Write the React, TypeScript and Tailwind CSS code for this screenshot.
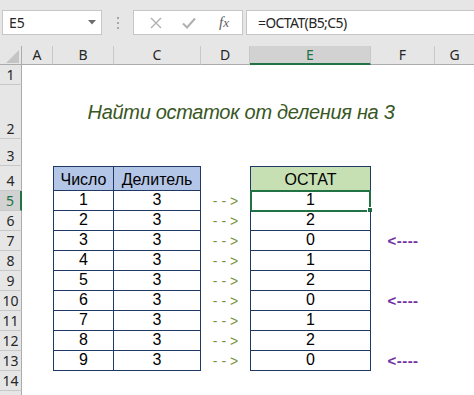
import React from "react";

function ColHeader({ label, selected, last }: { label: string; selected?: boolean; last?: boolean }) {
  return (
    <div
      className={
        selected
          ? "flex items-center justify-center bg-[#d2d2d2] border-r border-[#c8c8c8] border-b-2 border-b-[#217346] text-[#217346] text-[14px] leading-none"
          : last
          ? "flex items-center justify-center bg-[#e6e6e6] border-b border-[#ababab] text-[#262626] text-[14px] leading-none"
          : "flex items-center justify-center bg-[#e6e6e6] border-r border-[#c8c8c8] border-b border-b-[#ababab] text-[#262626] text-[14px] leading-none"
      }
      style={{ fontFamily: '"Noto Sans", "Open Sans", sans-serif' }}
    >
      {label}
    </div>
  );
}

function RowHeader({ n, selected }: { n: number; selected?: boolean }) {
  return (
    <div
      className={
        selected
          ? "flex items-end justify-center bg-[#d2d2d2] border-b border-[#c8c8c8] border-r-2 border-r-[#217346] text-[#217346] text-[14px] leading-[19px]"
          : "flex items-end justify-center bg-[#e6e6e6] border-b border-[#c8c8c8] border-r border-r-[#ababab] text-[#262626] text-[14px] leading-[19px]"
      }
      style={{ fontFamily: '"Noto Sans", "Open Sans", sans-serif' }}
    >
      {n}
    </div>
  );
}

export default function App() {
  const data = [1, 2, 3, 4, 5, 6, 7, 8, 9];
  const cell = { fontFamily: '"Liberation Sans", Arial, sans-serif' };
  return (
    <div className="w-[474px] h-[395px] overflow-hidden bg-white relative" style={cell}>
      {/* Formula bar */}
      <div className="h-[46px] bg-[#e6e6e6] flex items-start pt-[10px] pl-[2px]">
        <div className="w-[100px] h-[25px] bg-white border border-[#c6c6c6] flex items-center justify-between pl-[6px] pr-[5px]">
          <span className="text-[14px] text-[#262626]" style={{ fontFamily: '"Noto Sans", sans-serif' }}>E5</span>
          <svg width="8" height="5" viewBox="0 0 8 5"><path d="M0 0 L8 0 L4 4.5 Z" fill="#6d6d6d" /></svg>
        </div>
        <div className="w-[31px] h-[25px] flex flex-col items-center justify-center gap-[3px]">
          <div className="w-[2px] h-[2px] bg-[#a6a6a6]" />
          <div className="w-[2px] h-[2px] bg-[#a6a6a6]" />
          <div className="w-[2px] h-[2px] bg-[#a6a6a6]" />
        </div>
        <div className="w-[110px] h-[25px] bg-white border border-[#c6c6c6] flex items-center pl-[16px]">
          <svg width="12" height="12" viewBox="0 0 12 12"><path d="M1 1 L11 11 M11 1 L1 11" stroke="#b0b0b0" strokeWidth="1.4" fill="none" /></svg>
          <svg className="ml-[20px]" width="14" height="12" viewBox="0 0 14 12"><path d="M1 6.5 L5 10.5 L13 1.5" stroke="#b0b0b0" strokeWidth="2" fill="none" /></svg>
          <span className="ml-[23px] text-[15px] italic text-[#5f5f5f]" style={{ fontFamily: '"Liberation Serif", serif' }}>
            f<span className="text-[13px]">x</span>
          </span>
        </div>
        <div className="ml-[3px] flex-1 h-[25px] bg-white border border-[#c6c6c6] border-r-0 flex items-center pl-[11px]">
          <span className="text-[14px] tracking-[-0.6px] text-[#262626]" style={{ fontFamily: '"Noto Sans", sans-serif' }}>=ОСТАТ(B5;C5)</span>
        </div>
      </div>

      {/* Grid */}
      <div className="grid grid-cols-[22px_31px_61px_87px_49px_121px_64px_39px] grid-rows-[19px_20px_54px_27px_25px_20px_20px_20px_20px_20px_20px_20px_20px_20px_20px_20px]">
        {/* header row */}
        <div className="relative bg-[#e6e6e6] border-r border-[#ababab] border-b border-b-[#ababab]">
          <svg className="absolute left-[6px] top-[4px]" width="13" height="13" viewBox="0 0 13 13"><path d="M13 0 L13 13 L0 13 Z" fill="#c4c4c4" /></svg>
        </div>
        <ColHeader label="A" />
        <ColHeader label="B" />
        <ColHeader label="C" />
        <ColHeader label="D" />
        <ColHeader label="E" selected />
        <ColHeader label="F" />
        <ColHeader label="G" last />

        {/* row 1 */}
        <RowHeader n={1} />
        <div className="col-span-7" />

        {/* row 2 */}
        <RowHeader n={2} />
        <div />
        <div className="col-span-5 flex items-center justify-center pr-[6px]">
          <span className="italic text-[20px] tracking-[-0.3px] text-[#385723]">Найти остаток от деления на 3</span>
        </div>
        <div />

        {/* row 3 */}
        <RowHeader n={3} />
        <div className="col-span-7" />

        {/* row 4 */}
        <RowHeader n={4} />
        <div />
        <div className="flex items-end justify-center bg-[#b4c6e7] border border-[#1f3864] text-[16px] leading-[20px] text-black">Число</div>
        <div className="flex items-end justify-center bg-[#b4c6e7] border-t border-r border-b border-[#1f3864] text-[16px] leading-[20px] text-black">Делитель</div>
        <div />
        <div className="flex items-end justify-center bg-[#c6e0b4] border border-[#1f3864] text-[16px] leading-[20px] text-black">ОСТАТ</div>
        <div />
        <div />

        {data.map((n) => (
          <React.Fragment key={n}>
            <RowHeader n={n + 4} selected={n === 1} />
            <div />
            <div className="flex items-end justify-center border-l border-r border-b border-[#1f3864] text-[16px] leading-[20px] text-black">{n}</div>
            <div className="flex items-end justify-center border-r border-b border-[#1f3864] text-[16px] leading-[20px] text-black">3</div>
            <div className="flex items-center justify-center text-[14px] text-[#77933c] whitespace-pre">- - &gt;</div>
            <div className="relative flex items-end justify-center border-l border-r border-b border-[#1f3864] text-[16px] leading-[20px] text-black">
              {n % 3}
              {n === 1 && (
                <>
                  <div className="absolute -left-[1px] -top-[1px] -right-[1px] -bottom-[2px] border-2 border-[#217346]" />
                  <div className="absolute -right-[3px] -bottom-[3px] w-[6px] h-[6px] bg-[#217346] border border-white" />
                </>
              )}
            </div>
            <div className="flex items-center justify-center">
              {n % 3 === 0 && <span className="text-[15px] font-bold text-[#7030a0] tracking-[0.5px]">&lt;----</span>}
            </div>
            <div />
          </React.Fragment>
        ))}

        {/* row 14 */}
        <RowHeader n={14} />
        <div className="col-span-7" />
        <div className="bg-[#e6e6e6] border-r border-[#ababab]" />
        <div className="col-span-7" />
      </div>
    </div>
  );
}
